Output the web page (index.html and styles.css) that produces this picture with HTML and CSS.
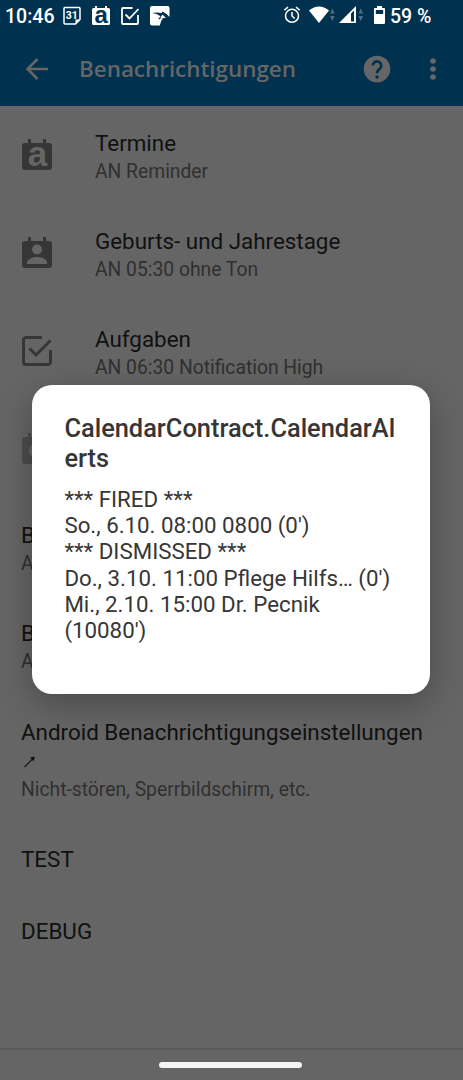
FILE: index.html
```html
<!DOCTYPE html>
<html lang="de">
<head>
    <meta charset="UTF-8">
    <meta name="viewport" content="width=device-width, initial-scale=1.0">
    <title>Benachrichtigungen</title>
    <link rel="stylesheet" href="styles.css">
</head>
<body>
    <header class="top">
        <div class="status-bar">
            <span class="clock">10:46</span>
            <div class="status-icons">
                <svg width="20" height="20" viewBox="0 0 20 20">
                    <path d="M3 1.500h14a1 1 0 0 1 1 1V13.500L13.500 18H3a1 1 0 0 1-1-1V2.500a1 1 0 0 1 1-1z" fill="none" stroke="#fff" stroke-width="1.500"/>
                    <path d="M13.500 18v-4.500H18z" fill="#fff"/>
                    <text x="9.800" y="13.200" class="day">31</text>
                </svg>
                <svg width="20" height="20" viewBox="0 0 20 20">
                    <path d="M2.500 2H4V0h2v2h8V0h2v2h1.500A1.500 1.500 0 0 1 19 3.500v14a1.500 1.500 0 0 1-1.500 1.500h-15A1.500 1.500 0 0 1 1 17.500v-14A1.500 1.500 0 0 1 2.500 2z" fill="#fff"/>
                    <text x="10.300" y="17" class="letter letter-small">a</text>
                </svg>
                <svg width="20" height="20" viewBox="0 0 20 20">
                    <path d="M12.500 2H3a1 1 0 0 0-1 1v14a1 1 0 0 0 1 1h14a1 1 0 0 0 1-1V9M5.500 8.500l4 4L18.500 3" fill="none" stroke="#fff" stroke-width="1.800"/>
                </svg>
                <svg width="21" height="20" viewBox="0 0 21 20">
                    <path d="M3 0h15.500a2 2 0 0 1 2 2v9Q17 7 13.500 5.500L12.500 7Q8 6 3 7q5 .5 8.500 3.200L9 13.500l5-1.300q-2.500 2.500-3.200 7.300H3a2 2 0 0 1-2-2V2a2 2 0 0 1 2-2z" fill="#fff"/>
                    <path d="M11 12.800l2.300-4.300 3.500 3.200z" fill="#fff"/>
                </svg>
            </div>
            <div class="system-icons">
                <svg class="alarm" width="18" height="18" viewBox="0 0 18 18" fill="none" stroke="#fff" stroke-width="1.500">
                    <circle cx="9" cy="9.800" r="6.500"/>
                    <path d="M9 6v4l2.700 2.500M1.300 4.200L5 1.200M16.700 4.200L13 1.200"/>
                </svg>
                <svg class="wifi" width="26" height="18" viewBox="0 0 26 18">
                    <path d="M0 4.500Q10-3.500 20 4.500L10 17z" fill="#fff"/>
                    <path d="M21 7.500l2.300-5 2.300 5zM21 10l2.300 5 2.300-5z" fill="#4d6f84"/>
                </svg>
                <svg class="signal" width="26" height="18" viewBox="0 0 26 18">
                    <path d="M0 17L17 0v17z" fill="#fff"/>
                    <path d="M12 7.500l3-3v11h-3z" fill="#00314e"/>
                    <path d="M19.500 7.500l2.300-5 2.300 5zM19.500 10l2.300 5 2.300-5z" fill="#4d6f84"/>
                </svg>
                <svg class="battery" width="11" height="18" viewBox="0 0 11 18">
                    <path d="M3 0h5v2h2a1 1 0 0 1 1 1v14a1 1 0 0 1-1 1H1a1 1 0 0 1-1-1V3a1 1 0 0 1 1-1h2z" fill="#fff"/>
                    <path d="M1.800 4h7.400v4H1.800z" fill="#00314e"/>
                </svg>
                <span>59 %</span>
            </div>
        </div>
        <div class="app-bar">
            <svg class="back" width="24" height="24" viewBox="0 0 24 24" fill="none" stroke="#666" stroke-width="2.500">
                <path d="M23 12H3M12.500 2L2.500 12l10 10"/>
            </svg>
            <h1>Benachrichtigungen</h1>
            <svg class="help" width="28" height="28" viewBox="0 0 28 28">
                <circle cx="14" cy="14" r="13.300" fill="#666"/>
                <path d="M9.800 10.500a4.200 4.200 0 1 1 7.200 3c-1.500 1.500-3 2.300-3 4.800" fill="none" stroke="#00314e" stroke-width="2.600"/>
                <circle cx="14" cy="22" r="1.700" fill="#00314e"/>
            </svg>
            <svg class="more" width="6" height="24" viewBox="0 0 6 24" fill="#666">
                <circle cx="3" cy="4" r="2.800"/>
                <circle cx="3" cy="12" r="2.800"/>
                <circle cx="3" cy="20" r="2.800"/>
            </svg>
        </div>
    </header>

    <main class="settings">
        <div class="row">
            <svg class="icon" width="30" height="32" viewBox="0 0 30 32">
                <path d="M3 4h3V0h3v4h12V0h3v4h3a3 3 0 0 1 3 3v21a3 3 0 0 1-3 3H3a3 3 0 0 1-3-3V7a3 3 0 0 1 3-3z" fill="#363636"/>
                <text x="15.500" y="27" class="letter">a</text>
            </svg>
            <div class="text">
                <h2>Termine</h2>
                <p>AN Reminder</p>
            </div>
        </div>
        <div class="row">
            <svg class="icon" width="30" height="32" viewBox="0 0 30 32">
                <path d="M3 4h3V0h3v4h12V0h3v4h3a3 3 0 0 1 3 3v21a3 3 0 0 1-3 3H3a3 3 0 0 1-3-3V7a3 3 0 0 1 3-3z" fill="#363636"/>
                <circle cx="15" cy="12.500" r="5" fill="#656565"/>
                <path d="M5 27v-1.500c0-3.500 6-5.500 10-5.500s10 2 10 5.500V27z" fill="#656565"/>
            </svg>
            <div class="text">
                <h2>Geburts- und Jahrestage</h2>
                <p>AN 05:30 ohne Ton</p>
            </div>
        </div>
        <div class="row">
            <svg class="icon" width="30" height="32" viewBox="0 0 30 32" fill="none" stroke="#363636" stroke-width="3">
                <path d="M20 2.500H4A2.500 2.500 0 0 0 1.500 5v22A2.500 2.500 0 0 0 4 29.500h22a2.500 2.500 0 0 0 2.500-2.500V15M7.500 13.500l6.500 6.500L28.500 5.500"/>
            </svg>
            <div class="text">
                <h2>Aufgaben</h2>
                <p>AN 06:30 Notification High</p>
            </div>
        </div>
        <div class="row">
            <svg class="icon" width="30" height="32" viewBox="0 0 30 32">
                <path d="M3 4h3V0h3v4h12V0h3v4h3a3 3 0 0 1 3 3v21a3 3 0 0 1-3 3H3a3 3 0 0 1-3-3V7a3 3 0 0 1 3-3z" fill="#4c4c4c"/>
                <circle cx="15" cy="17.500" r="8" fill="#656565"/>
            </svg>
        </div>
        <div class="row">
            <div class="text">
                <h2>B</h2>
                <p>A</p>
            </div>
        </div>
        <div class="row">
            <div class="text">
                <h2>B</h2>
                <p>A</p>
            </div>
        </div>
        <div class="row row-tall">
            <div class="text">
                <h2>Android Benachrichtigungseinstellungen
                    <svg class="arrow" width="14" height="14" viewBox="0 0 14 14">
                        <path d="M2.500 12L12 2.500" stroke="#111" stroke-width="1.100"/>
                        <path d="M8 2.500L12.800 1.500 11.700 6.200z" fill="#111"/>
                    </svg>
                </h2>
                <p>Nicht-stören, Sperrbildschirm, etc.</p>
            </div>
        </div>
        <div class="row row-single">
            <h2>TEST</h2>
        </div>
        <div class="row row-single">
            <h2>DEBUG</h2>
        </div>
    </main>

    <footer class="nav-bar">
        <div class="handle"></div>
    </footer>

    <div class="dialog">
        <h2>CalendarContract.CalendarAlerts</h2>
        <p>
            *** FIRED ***<br>
            So., 6.10. 08:00 0800 (0')<br>
            *** DISMISSED ***<br>
            Do., 3.10. 11:00 Pflege Hilfs… (0')<br>
            Mi., 2.10. 15:00 Dr. Pecnik (10080')
        </p>
    </div>
</body>
</html>
```
FILE: styles.css
```css
* {
    box-sizing: border-box;
}

body {
    margin: 0;
    height: 1080px;
    display: flex;
    flex-direction: column;
    overflow: hidden;
    background: #656565;
    font-family: Roboto, sans-serif;
}

h1, h2, p {
    margin: 0;
    font-weight: 400;
}

svg {
    display: block;
    flex: none;
    overflow: visible;
}

.top {
    height: 106px;
    background: #00314e;
}

.status-bar {
    height: 32px;
    display: flex;
    align-items: center;
    padding: 0 33px 0 5px;
    color: #fff;
    font-size: 20px;
    font-weight: 500;
}

.clock {
    width: 57px;
    font-size: 19.5px;
}

.status-icons {
    display: flex;
    gap: 9px;
    margin-top: -1px;
}

.system-icons {
    display: flex;
    align-items: center;
    margin-left: auto;
}

.system-icons svg {
    margin-top: -2px;
}

.system-icons span {
    width: 40px;
    font-size: 19.5px;
    white-space: nowrap;
}

.system-icons .wifi {
    margin-left: 8px;
}

.system-icons .signal {
    margin-left: 4px;
}

.system-icons .battery {
    margin-left: 9px;
    margin-right: 5px;
}

.day {
    fill: #fff;
    font-size: 10.5px;
    font-weight: 700;
    text-anchor: middle;
}

.letter {
    fill: #656565;
    font-family: "Liberation Sans", sans-serif;
    font-size: 35px;
    font-weight: 700;
    text-anchor: middle;
}

.letter-small {
    fill: #00314e;
    font-size: 24px;
}

.app-bar {
    height: 74px;
    display: flex;
    align-items: center;
    padding: 0 27px 0 25px;
    color: #666;
}

.app-bar h1 {
    margin: -2px 0 0 30px;
    font-family: "Open Sans", sans-serif;
    font-size: 22.4px;
    font-weight: 600;
}

.help {
    margin-left: auto;
}

.more {
    margin-left: 39px;
}

.settings {
    flex: 1;
}

.row {
    height: 98px;
    display: flex;
    align-items: center;
    padding: 0 21px;
}

.icon {
    margin: 0 43px 0 1px;
}

.row h2 {
    color: #111;
    font-size: 22.4px;
    line-height: 30px;
}

.row p {
    color: #303030;
    font-size: 19.3px;
    line-height: 26px;
}

.text {
    padding-top: 2px;
}

.text h2 {
    margin-bottom: 1px;
}

.row-tall {
    height: 129px;
}

.row-single {
    height: 72px;
}

.arrow {
    margin: 8px 0 8px 1px;
}

.nav-bar {
    height: 32px;
    display: flex;
    justify-content: center;
    padding: 12px 2px 0 0;
    border-top: 2px solid #5a5a5a;
}

.handle {
    width: 143px;
    height: 6px;
    border-radius: 3px;
    background: #f4f4f4;
}

/* the dialog lies over the settings list */
.dialog {
    position: absolute;
    top: 385px;
    left: 32.4px;
    width: 398px;
    height: 309px;
    padding: 28px 32px;
    border-radius: 20px;
    background: #fff;
    color: #363636;
    box-shadow: 0 10px 34px rgba(0, 0, 0, 0.28);
}

.dialog h2 {
    font-size: 25.4px;
    font-weight: 500;
    line-height: 30px;
    word-break: break-all;
}

.dialog p {
    margin-top: 13px;
    font-size: 22.3px;
    line-height: 26.2px;
}
```
